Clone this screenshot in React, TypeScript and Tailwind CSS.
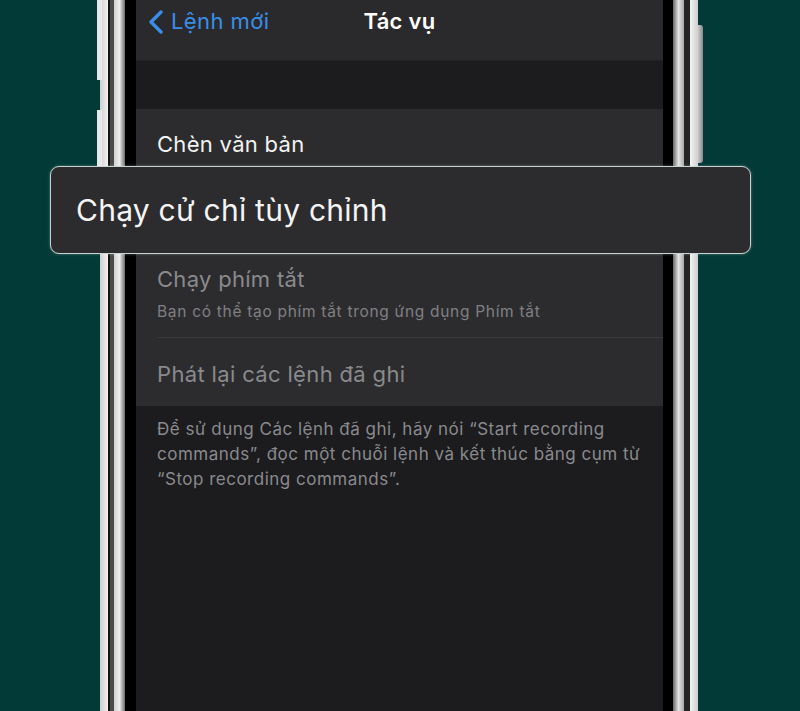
import React from 'react'

const font = { fontFamily: 'Inter, "Noto Sans", sans-serif' }

const App = () => {
    return (
        <div className="w-[800px] h-[711px] bg-[#013a36] overflow-hidden flex pl-[100px]" style={font}>
            {/* Phone frame, left edge */}
            <div className="relative flex h-full">
                <div className="absolute left-[-3px] top-0 w-[5px] h-[80px] bg-[#e8e8e8]" />
                <div className="absolute left-[-3px] top-[110px] w-[5px] h-[132px] bg-[#e8e8e8]" />
                <div className="w-[8px] h-full bg-gradient-to-r from-[#cfcfcf] to-[#f2f2f2]" />
                <div className="w-[2px] h-full bg-[#151515]" />
                <div className="w-[4px] h-full bg-[#4a4a4a]" />
                <div className="w-[11px] h-full bg-gradient-to-r from-[#d0d0d0] via-[#eeeeee] to-[#6e6e6e]" />
                <div className="w-[11px] h-full bg-black" />
            </div>

            {/* Screen */}
            <div className="relative w-[527px] h-full bg-[#1c1c1e] flex flex-col">
                {/* Nav bar */}
                <div className="relative h-[61px] bg-[#2a2a2c] border-b border-[#222224] flex items-start pt-[5px] pl-[11px]">
                    <div className="flex items-center h-[32px]">
                        <svg width="18" height="24" viewBox="0 0 18 24" className="mt-[1px]">
                            <path d="M14 2 L4 12 L14 22" fill="none" stroke="#3a8ee8" strokeWidth="3.4" strokeLinecap="round" strokeLinejoin="round" />
                        </svg>
                        <span className="ml-[6px] text-[22px] text-[#3a8ee8] tracking-[0.4px]">Lệnh mới</span>
                    </div>
                    <div className="absolute inset-x-0 top-[5px] h-[32px] flex items-center justify-center">
                        <span className="text-[22px] font-semibold text-white tracking-[0.3px]">Tác vụ</span>
                    </div>
                </div>

                <div className="h-[48px]" />

                {/* Action list */}
                <div className="bg-[#2c2c2e] flex flex-col">
                    <div className="h-[68px] pl-[21px] pt-[4px] flex items-center border-b border-[#3a3a3c]">
                        <span className="text-[22px] text-[#f2f2f2] tracking-[0.3px]">Chèn văn bản</span>
                    </div>
                    {/* row shown enlarged in the popup */}
                    <div className="h-[68px] border-b border-[#3a3a3c]" />
                    <div className="h-[93px] ml-[21px] pt-[5px] flex flex-col justify-center border-b border-[#3a3a3c]">
                        <span className="text-[22px] leading-[30px] text-[#8a8a8d] tracking-[0.3px]">Chạy phím tắt</span>
                        <span className="text-[15.5px] leading-[24px] mt-[6px] text-[#808084] tracking-[0.7px]">Bạn có thể tạo phím tắt trong ứng dụng Phím tắt</span>
                    </div>
                    <div className="h-[68px] pl-[21px] pt-[5px] flex items-center">
                        <span className="text-[22px] text-[#8a8a8d] tracking-[0.35px]">Phát lại các lệnh đã ghi</span>
                    </div>
                </div>

                {/* Footer note */}
                <p className="pl-[21px] pt-[11px] text-[17px] leading-[25px] text-[#8a8a8e] tracking-[0.5px] whitespace-nowrap">
                    Để sử dụng Các lệnh đã ghi, hãy nói “Start recording
                    <br />
                    commands”, đọc một chuỗi lệnh và kết thúc bằng cụm từ
                    <br />
                    “Stop recording commands”.
                </p>
            </div>

            {/* Phone frame, right edge */}
            <div className="relative flex h-full">
                <div className="w-[10px] h-full bg-black" />
                <div className="w-[11px] h-full bg-gradient-to-r from-[#6a6a6a] via-[#e4e4e4] to-[#a8a8a8]" />
                <div className="w-[6px] h-full bg-[#242424]" />
                <div className="w-[8px] h-full bg-gradient-to-r from-[#f4f4f4] to-[#cfcfcf]" />
                <div className="absolute right-[-5px] top-[25px] w-[6px] h-[138px] rounded-r-[3px] bg-gradient-to-r from-[#d8d8d8] to-[#8a8a8a]" />
            </div>

            {/* Highlighted action popup */}
            <div className="absolute left-[50px] top-[166px] w-[701px] h-[88px] rounded-[9px] border-[1.5px] border-[#c9d3d1] bg-[#2c2c2e] shadow-[0_0_3px_rgba(255,255,255,0.35)] flex items-center pl-[25px]">
                <span className="text-[30px] text-[#f4f4f4] tracking-[0.25px]">Chạy cử chỉ tùy chỉnh</span>
            </div>
        </div>
    )
}

export default App
